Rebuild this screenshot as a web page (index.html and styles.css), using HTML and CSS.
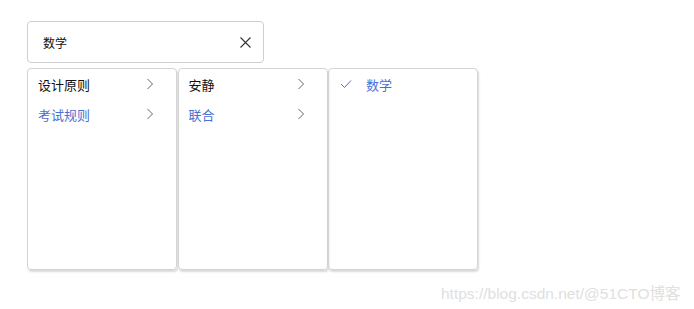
FILE: index.html
```html
<!DOCTYPE html>
<html lang="zh-CN">
<head>
    <meta charset="UTF-8">
    <title>Cascader</title>
    <link rel="stylesheet" href="styles.css">
</head>
<body>
    <div class="cascader">
        <div class="cascader-input">
            <span class="value">数学</span>
            <svg class="clear" width="11" height="11" viewBox="0 0 11 11"><path d="M0.5 0.5L10.5 10.5M10.5 0.5L0.5 10.5" stroke="#333" stroke-width="1.1" fill="none"/></svg>
        </div>
        <div class="menus">
            <ul class="menu">
                <li class="item">设计原则<svg class="arrow" width="8" height="12" viewBox="0 0 8 12"><path d="M1.5 1L6.5 6L1.5 11" stroke="#666" stroke-width="1" fill="none"/></svg></li>
                <li class="item active">考试规则<svg class="arrow" width="8" height="12" viewBox="0 0 8 12"><path d="M1.5 1L6.5 6L1.5 11" stroke="#666" stroke-width="1" fill="none"/></svg></li>
            </ul>
            <ul class="menu">
                <li class="item">安静<svg class="arrow" width="8" height="12" viewBox="0 0 8 12"><path d="M1.5 1L6.5 6L1.5 11" stroke="#666" stroke-width="1" fill="none"/></svg></li>
                <li class="item active">联合<svg class="arrow" width="8" height="12" viewBox="0 0 8 12"><path d="M1.5 1L6.5 6L1.5 11" stroke="#666" stroke-width="1" fill="none"/></svg></li>
            </ul>
            <ul class="menu">
                <li class="item active checked"><svg class="check" width="12" height="10" viewBox="0 0 12 10"><path d="M1 5L4.5 8.5L11 1.5" stroke="#4a6fd6" stroke-width="1" fill="none"/></svg>数学</li>
            </ul>
        </div>
    </div>
    <div class="watermark">https://blog.csdn.net/@51CTO博客</div>
</body>
</html>
```

FILE: styles.css
```css
body {
    margin: 0;
    font-family: "Noto Sans CJK SC", "Liberation Sans", sans-serif;
    background: #fff;
    color: #111;
    width: 694px;
    height: 309px;
    position: relative;
    overflow: hidden;
}

.cascader {
    padding: 21px 0 0 27px;
}

.cascader-input {
    box-sizing: border-box;
    width: 237px;
    height: 42px;
    border: 1px solid #cfcfcf;
    border-radius: 4px;
    display: flex;
    align-items: center;
    justify-content: space-between;
    padding: 0 12px 0 15px;
    font-size: 12px;
}

.menus {
    display: flex;
    margin-top: 5px;
}

.menu {
    list-style: none;
    margin: 0 0.5px 0 0;
    padding: 0;
    box-sizing: border-box;
    width: 150px;
    height: 202px;
    border: 1px solid #d4d4d4;
    border-radius: 4px;
    box-shadow: 1px 2px 2px rgba(0, 0, 0, 0.15);
}

.item {
    height: 30px;
    display: flex;
    align-items: center;
    justify-content: space-between;
    padding: 0 22px 0 10px;
    font-size: 13px;
}

.item.active {
    color: #4a6fd6;
}

.item.checked {
    justify-content: flex-start;
    padding-left: 11px;
}

.check {
    margin-right: 14px;
}

.watermark {
    position: absolute;
    left: 441px;
    top: 281px;
    font-size: 15.5px;
    color: #e0e0e0;
    font-family: "Liberation Sans", "Noto Sans CJK SC", sans-serif;
}
```
